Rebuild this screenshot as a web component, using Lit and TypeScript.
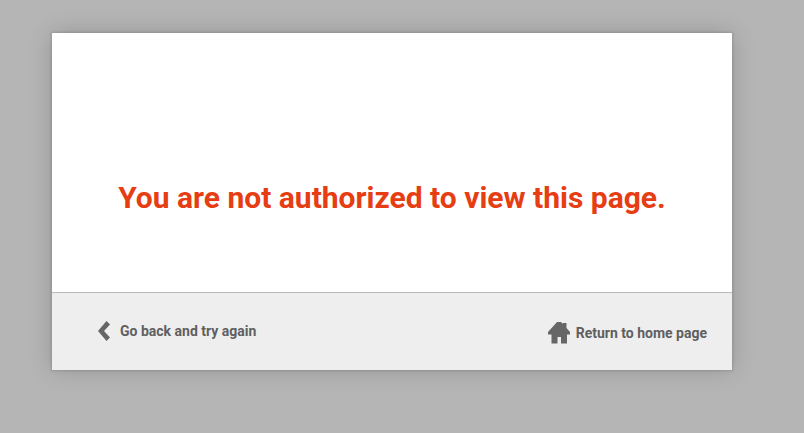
import { LitElement, html, css } from "lit";
import { customElement } from "lit/decorators.js";

@customElement("app-root")
export class AppRoot extends LitElement {
  static styles = css`
    :host {
      display: block;
      width: 804px;
      height: 433px;
      overflow: hidden;
      background: #b5b5b5;
      font-family: Roboto, "Liberation Sans", sans-serif;
    }
    .page {
      box-sizing: border-box;
      height: 433px;
      padding: 33px 72px 0 52px;
    }
    .card {
      display: flex;
      flex-direction: column;
      height: 337px;
      background: #fff;
      box-shadow: 0 0 2px 1px rgba(0, 0, 0, 0.12), 0 0 22px rgba(0, 0, 0, 0.18);
    }
    .main {
      box-sizing: border-box;
      height: 260px;
      padding-top: 146px;
      text-align: center;
      border-bottom: 1px solid #b9b9b9;
    }
    h1 {
      margin: 0;
      font-size: 30px;
      line-height: 38px;
      font-weight: 700;
      color: #e63d12;
    }
    .foot {
      flex: 1;
      display: flex;
      justify-content: space-between;
      background: #eeeeee;
      padding: 0 25px 0 46px;
      color: #5f5f5f;
      font-size: 14px;
      font-weight: 700;
    }
    .link {
      display: flex;
      align-items: center;
      color: inherit;
      text-decoration: none;
    }
    .back {
      gap: 8px;
      margin-bottom: 1px;
    }
    .home {
      gap: 6px;
      margin-top: 2px;
    }
    svg {
      display: block;
      fill: #666;
    }
  `;

  render() {
    return html`
      <div class="page">
        <div class="card">
          <div class="main"><h1>You are not authorized to view this page.</h1></div>
          <div class="foot">
            <a class="link back" href="#">
              <svg width="14" height="20" viewBox="0 0 14 20"><path d="M8.5 0 12 3.5 6 10 12 16.5 8.5 20 0 10Z" /></svg>
              <span>Go back and try again</span>
            </a>
            <a class="link home" href="#">
              <svg width="22" height="22" viewBox="0 0 22 22"><path d="M9 0H13L15 2V1H18.5V6L22 10V12.5H19V21.5H13V15H9.5V21.5H3.5V12.5H0V10Z" /></svg>
              <span>Return to home page</span>
            </a>
          </div>
        </div>
      </div>
    `;
  }
}
